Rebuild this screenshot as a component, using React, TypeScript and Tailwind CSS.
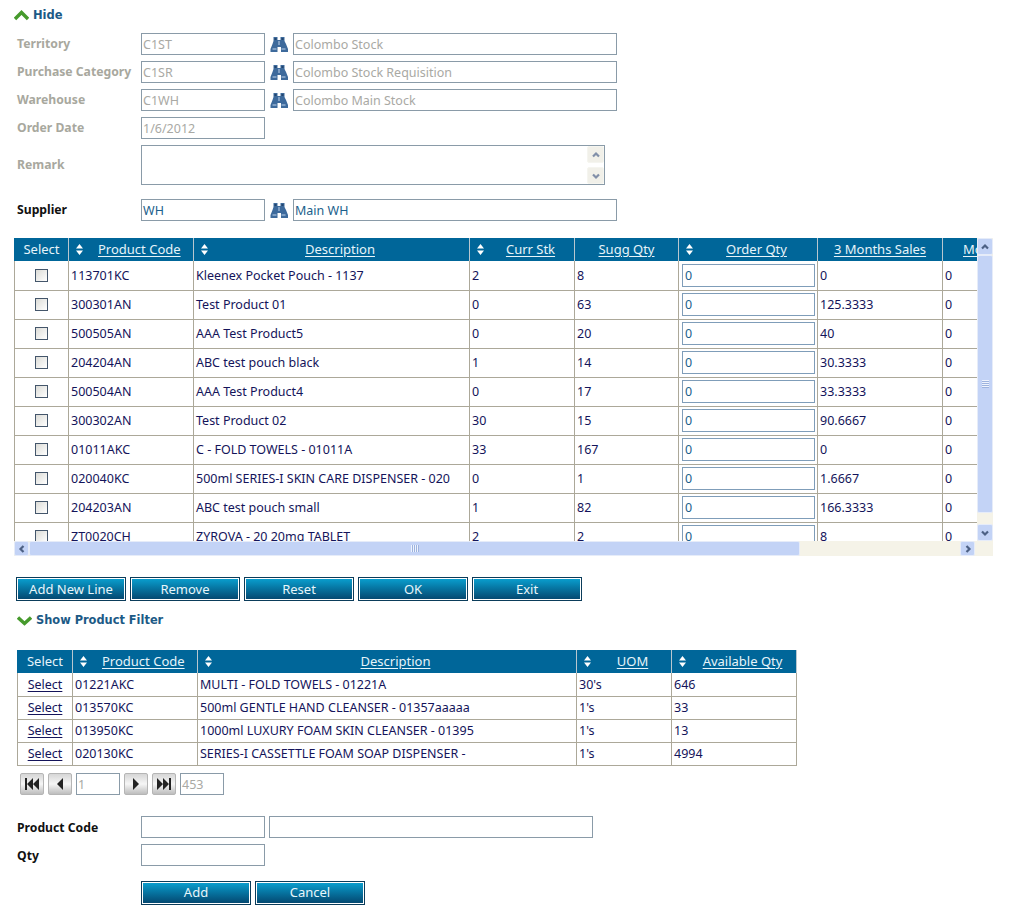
const bodyFont = "font-['Noto_Sans','Liberation_Sans',sans-serif] text-[12.5px]";
const cell = "border-r border-[#aca899] pl-[2px] pt-[2px] whitespace-nowrap";

const mainRows = [
  ["113701KC", "Kleenex Pocket Pouch - 1137", "2", "8", "0", "0"],
  ["300301AN", "Test Product 01", "0", "63", "125.3333", "0"],
  ["500505AN", "AAA Test Product5", "0", "20", "40", "0"],
  ["204204AN", "ABC test pouch black", "1", "14", "30.3333", "0"],
  ["500504AN", "AAA Test Product4", "0", "17", "33.3333", "0"],
  ["300302AN", "Test Product 02", "30", "15", "90.6667", "0"],
  ["01011AKC", "C - FOLD TOWELS - 01011A", "33", "167", "0", "0"],
  ["020040KC", "500ml SERIES-I SKIN CARE DISPENSER - 020", "0", "1", "1.6667", "0"],
  ["204203AN", "ABC test pouch small", "1", "82", "166.3333", "0"],
  ["ZT0020CH", "ZYROVA - 20 20mg TABLET", "2", "2", "8", "0"],
];

const filterRows = [
  ["01221AKC", "MULTI - FOLD TOWELS - 01221A", "30's", "646"],
  ["013570KC", "500ml GENTLE HAND CLEANSER - 01357aaaaa", "1's", "33"],
  ["013950KC", "1000ml LUXURY FOAM SKIN CLEANSER - 01395", "1's", "13"],
  ["020130KC", "SERIES-I CASSETTLE FOAM SOAP DISPENSER -", "1's", "4994"],
];

function SortIcon() {
  return (
    <svg width="7" height="11" viewBox="0 0 7 11" className="shrink-0 fill-white">
      <path d="M3.5 0 7 4.4H0zM3.5 11 0 6.6h7z" />
    </svg>
  );
}

function SortHead({ label, center = false, gap }: { label: string; center?: boolean; gap?: string }) {
  return (
    <th className="border-r border-[#b9c7cf] px-[7px] font-normal">
      <div className="flex items-center">
        <SortIcon />
        <span className={center ? "ml-[10px] flex-1 text-center" : gap}>
          <span className="underline underline-offset-2">{label}</span>
        </span>
      </div>
    </th>
  );
}

function Chevron({ down = false }: { down?: boolean }) {
  return (
    <svg width="15" height="11" viewBox="0 0 15 11" className="shrink-0">
      <path
        d={down ? "M1 2.5 7.5 8.5 14 2.5" : "M1 9 7.5 2.5 14 9"}
        fill="none"
        stroke="#469a2c"
        strokeWidth="3.4"
      />
    </svg>
  );
}

function Binoculars() {
  return (
    <svg width="18" height="17" viewBox="0 0 18 17" className="mx-[5px] mt-[3px] shrink-0">
      <path d="M3.5 1h4v3h3V1h4v4l1.5 3 2 5v3h-7v-5H7.5v5H.5v-3l2-5 1-3z" fill="#3d6a9c" />
      <path d="M8 5h2v4H8zM2.5 12h4v2h-4zM11.5 12h4v2h-4z" fill="#7f9fc4" />
      <path d="M4.5 2h2v2h-2zM11.5 2h2v2h-2z" fill="#22456f" />
    </svg>
  );
}

function Field({ value, className, muted }: { value?: string; className: string; muted?: boolean }) {
  return (
    <div
      className={`h-[22px] shrink-0 border border-[#8a9ba8] bg-white pl-[1px] leading-[22px] ${
        muted ? "text-[#a9a9a4]" : "text-[#1c5f8c]"
      } ${className}`}
    >
      {value}
    </div>
  );
}

function Label({ text, muted, className = "" }: { text: string; muted?: boolean; className?: string }) {
  return (
    <div
      className={`w-[124px] shrink-0 text-[12.2px] font-bold leading-[21px] ${
        muted ? "text-[#a8a89e]" : "text-[#111111]"
      } ${className}`}
    >
      {text}
    </div>
  );
}

function LookupRow({ label, code, name, muted }: { label: string; code: string; name: string; muted?: boolean }) {
  return (
    <div className="flex h-[22px] items-start">
      <Label text={label} muted={muted} />
      <Field value={code} muted={muted} className="w-[124px]" />
      <Binoculars />
      <Field value={name} muted={muted} className="w-[324px]" />
    </div>
  );
}

function BlueButton({ text }: { text: string }) {
  return (
    <button className="h-[24px] w-[110px] border border-[#0b3c5a] bg-gradient-to-b from-[#0aa2d2] to-[#04456d] text-[13px] leading-none text-[#e8f6fb] shadow-[inset_0_0_0_1px_white]">
      {text}
    </button>
  );
}

function ScrollArrow({ dir, className = "" }: { dir: "up" | "down" | "left" | "right"; className?: string }) {
  const d = {
    up: "M2 6.5 5 3.5 8 6.5",
    down: "M2 3.5 5 6.5 8 3.5",
    left: "M6.5 2 3.5 5 6.5 8",
    right: "M3.5 2 6.5 5 3.5 8",
  }[dir];
  return (
    <div
      className={`flex shrink-0 items-center justify-center rounded-[2px] border border-[#e6ecf9] bg-[#c3d3f6] ${className}`}
    >
      <svg width="10" height="10" viewBox="0 0 10 10">
        <path d={d} fill="none" stroke="#4d6185" strokeWidth="2.2" />
      </svg>
    </div>
  );
}

function PagerButton({ children }: { children: React.ReactNode }) {
  return (
    <div className="flex h-[22px] w-[24px] shrink-0 items-center justify-center rounded-[2px] border border-[#b5b5b5] bg-gradient-to-b from-[#d6d6d6] via-[#f6f6f6] to-[#bdbdbd]">
      <svg width="18" height="14" viewBox="0 0 18 14" className="fill-[#222222]">
        {children}
      </svg>
    </div>
  );
}

export default function App() {
  return (
    <div className={`${bodyFont} h-[920px] w-[1013px] overflow-hidden bg-white pl-[14px] pt-[8px]`}>
      <div className="flex h-[14px] items-center gap-[4px] pt-[1px] font-['DejaVu_Sans',sans-serif] text-[11.5px] font-bold text-[#1c5a86]">
        <Chevron />
        <span>Hide</span>
      </div>

      <div className="ml-[3px] mt-[11px] flex flex-col gap-[6px]">
        <LookupRow label="Territory" code="C1ST" name="Colombo Stock" muted />
        <LookupRow label="Purchase Category" code="C1SR" name="Colombo Stock Requisition" muted />
        <LookupRow label="Warehouse" code="C1WH" name="Colombo Main Stock" muted />
        <div className="flex h-[22px] items-start">
          <Label text="Order Date" muted />
          <Field value="1/6/2012" muted className="w-[124px]" />
        </div>
        <div className="flex h-[40px] items-center">
          <Label text="Remark" muted className="mb-[2px]" />
          <div className="flex h-[40px] w-[464px] justify-end border border-[#8a9ba8] bg-white">
            <div className="flex w-[17px] flex-col justify-between">
              <ScrollArrow dir="up" className="h-[17px] border-[#f2f2ea] bg-[#ecebe0] opacity-70" />
              <ScrollArrow dir="down" className="h-[17px] border-[#f2f2ea] bg-[#ecebe0] opacity-70" />
            </div>
          </div>
        </div>
        <div className="mt-[8px]">
          <LookupRow label="Supplier" code="WH" name="Main WH" />
        </div>
      </div>

      <div className="mt-[17px] flex w-[979px]">
        <div className="w-[963px] shrink-0">
          <div className="h-[303px] overflow-hidden">
            <table className="w-[990px] table-fixed border-collapse text-[#14145a]">
              <colgroup>
                <col className="w-[54px]" />
                <col className="w-[125px]" />
                <col className="w-[276px]" />
                <col className="w-[105px]" />
                <col className="w-[104px]" />
                <col className="w-[139px]" />
                <col className="w-[125px]" />
                <col className="w-[62px]" />
              </colgroup>
              <thead>
                <tr className="h-[23px] bg-[#006699] text-[13px] text-[#e6f4fa]">
                  <th className="border-x border-x-[#006699] border-r-[#b9c7cf] font-normal">Select</th>
                  <SortHead label="Product Code" gap="ml-[15px]" />
                  <SortHead label="Description" center />
                  <SortHead label="Curr Stk" center />
                  <th className="border-r border-[#b9c7cf] font-normal">
                    <span className="underline underline-offset-2">Sugg Qty</span>
                  </th>
                  <SortHead label="Order Qty" center />
                  <th className="border-r border-[#b9c7cf] font-normal">
                    <span className="underline underline-offset-2">3 Months Sales</span>
                  </th>
                  <th className="pl-[20px] text-left font-normal">
                    <span className="underline underline-offset-2">Months</span>
                  </th>
                </tr>
              </thead>
              <tbody>
                {mainRows.map((row) => (
                  <tr key={row[0]} className="h-[29px] border-b border-[#aca899] bg-white">
                    <td className="border-x border-[#aca899] text-center">
                      <div className="mx-auto h-[13px] w-[13px] border border-[#44566b] bg-gradient-to-br from-[#dcdcd7] to-white" />
                    </td>
                    <td className={cell}>{row[0]}</td>
                    <td className={cell}>{row[1]}</td>
                    <td className={cell}>{row[2]}</td>
                    <td className={cell}>{row[3]}</td>
                    <td className="border-r border-[#aca899] pl-[3px]">
                      <div className="h-[23px] w-[133px] border border-[#7f9db9] pl-[2px] leading-[21px] text-[#1c5f8c]">0</div>
                    </td>
                    <td className={cell}>{row[4]}</td>
                    <td className="pl-[2px] pt-[2px]">{row[5]}</td>
                  </tr>
                ))}
              </tbody>
            </table>
          </div>
          <div className="flex h-[15px] items-stretch bg-[#f5f3e8]">
            <ScrollArrow dir="left" className="w-[15px]" />
            <div className="flex w-[771px] items-center justify-center rounded-[2px] border border-[#e6ecf9] bg-[#c3d3f6]">
              <div className="h-[7px] w-[8px] bg-[repeating-linear-gradient(90deg,#eef3fd_0,#eef3fd_1px,#9db3de_1px,#9db3de_2px)]" />
            </div>
            <div className="flex-1" />
            <ScrollArrow dir="right" className="w-[15px]" />
            <div className="w-[2px]" />
          </div>
        </div>
        <div className="flex w-[16px] flex-col">
          <div className="flex h-[303px] flex-col bg-[#f5f3e8]">
            <ScrollArrow dir="up" className="h-[17px]" />
            <div className="flex h-[258px] items-center justify-center rounded-[2px] border border-[#e6ecf9] bg-[#c3d3f6]">
              <div className="h-[8px] w-[7px] bg-[repeating-linear-gradient(180deg,#eef3fd_0,#eef3fd_1px,#9db3de_1px,#9db3de_2px)]" />
            </div>
            <div className="flex-1" />
            <ScrollArrow dir="down" className="h-[17px]" />
          </div>
          <div className="h-[15px] bg-[#f5f3e8]" />
        </div>
      </div>

      <div className="ml-[2px] mt-[21px] flex gap-[4px]">
        {["Add New Line", "Remove", "Reset", "OK", "Exit"].map((label) => (
          <BlueButton key={label} text={label} />
        ))}
      </div>

      <div className="ml-[3px] mt-[12px] flex h-[14px] items-center gap-[4px] pt-[1px] font-['DejaVu_Sans',sans-serif] text-[11.4px] font-bold text-[#1c5a86]">
        <Chevron down />
        <span>Show Product Filter</span>
      </div>

      <div className="ml-[3px] mt-[23px] w-[780px]">
        <table className="w-[779px] table-fixed border-collapse text-[#14145a]">
          <colgroup>
            <col className="w-[55px]" />
            <col className="w-[125px]" />
            <col className="w-[379px]" />
            <col className="w-[95px]" />
            <col className="w-[125px]" />
          </colgroup>
          <thead>
            <tr className="h-[23px] bg-[#006699] text-[13px] text-[#e6f4fa]">
              <th className="border-x border-x-[#006699] border-r-[#b9c7cf] font-normal">Select</th>
              <SortHead label="Product Code" gap="ml-[15px]" />
              <SortHead label="Description" center />
              <SortHead label="UOM" center />
              <SortHead label="Available Qty" center />
            </tr>
          </thead>
          <tbody>
            {filterRows.map((row) => (
              <tr key={row[0]} className="h-[23px] border-b border-[#aca899]">
                <td className="border-x border-[#aca899] pt-[2px] text-center underline underline-offset-2">Select</td>
                <td className={cell}>{row[0]}</td>
                <td className={cell}>{row[1]}</td>
                <td className={cell}>{row[2]}</td>
                <td className={cell}>{row[3]}</td>
              </tr>
            ))}
          </tbody>
        </table>
      </div>

      <div className="ml-[6px] mt-[7px] flex h-[22px] items-center gap-[4px]">
        <PagerButton>
          <path d="M2 1h2v12H2zM10 1v12L4 7zM16 1v12L10 7z" />
        </PagerButton>
        <PagerButton>
          <path d="M12 1v12L6 7z" />
        </PagerButton>
        <Field value="1" muted className="w-[44px]" />
        <PagerButton>
          <path d="M6 1v12l6-6z" />
        </PagerButton>
        <PagerButton>
          <path d="M2 1v12l6-6zM8 1v12l6-6zM14 1h2v12h-2z" />
        </PagerButton>
        <Field value="453" muted className="w-[44px]" />
      </div>

      <div className="ml-[3px] mt-[21px] flex flex-col gap-[6px]">
        <div className="flex h-[22px] items-start">
          <Label text="Product Code" className="pt-[1px]" />
          <Field className="w-[124px]" />
          <Field className="ml-[4px] w-[324px]" />
        </div>
        <div className="flex h-[22px] items-start">
          <Label text="Qty" className="pt-[1px]" />
          <Field className="w-[124px]" />
        </div>
      </div>

      <div className="ml-[127px] mt-[15px] flex gap-[4px]">
        <BlueButton text="Add" />
        <BlueButton text="Cancel" />
      </div>
    </div>
  );
}
